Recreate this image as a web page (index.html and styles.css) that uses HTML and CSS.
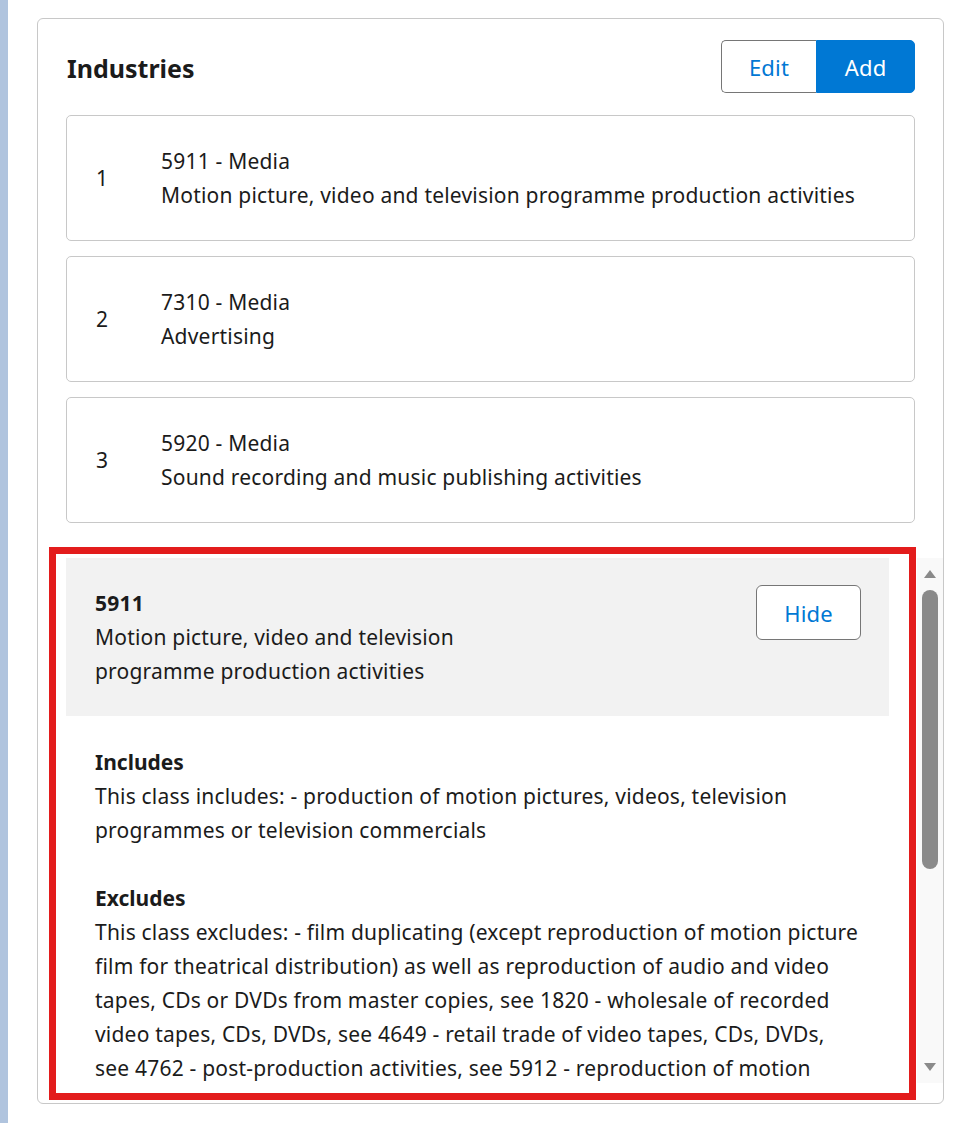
FILE: index.html
```html
<!DOCTYPE html>
<html lang="en">
<head>
<meta charset="utf-8">
<title>Industries</title>
<link rel="stylesheet" href="styles.css">
</head>
<body>
<div class="page">
  <div class="strip"></div>
  <main class="main">
    <div class="card">
      <div class="header">
        <h2 class="title">Industries</h2>
        <div class="btn-group">
          <button class="btn btn-edit">Edit</button>
          <button class="btn btn-add">Add</button>
        </div>
      </div>
      <div class="list">
        <div class="item">
          <div class="num">1</div>
          <div class="item-text">
            <div>5911 - Media</div>
            <div>Motion picture, video and television programme production activities</div>
          </div>
        </div>
        <div class="item">
          <div class="num">2</div>
          <div class="item-text">
            <div>7310 - Media</div>
            <div>Advertising</div>
          </div>
        </div>
        <div class="item">
          <div class="num">3</div>
          <div class="item-text">
            <div>5920 - Media</div>
            <div>Sound recording and music publishing activities</div>
          </div>
        </div>
      </div>
      <div class="details">
        <div class="details-scroll">
          <div class="summary">
            <div class="summary-text">
              <div class="code">5911</div>
              <div>Motion picture, video and television programme production activities</div>
            </div>
            <button class="btn-hide">Hide</button>
          </div>
          <div class="section">
            <div class="section-head">Includes</div>
            <div>This class includes: - production of motion pictures, videos, television programmes or television commercials</div>
          </div>
          <div class="section">
            <div class="section-head">Excludes</div>
            <div>This class excludes: - film duplicating (except reproduction of motion picture film for theatrical distribution) as well as reproduction of audio and video tapes, CDs or DVDs from master copies, see 1820 - wholesale of recorded video tapes, CDs, DVDs, see 4649 - retail trade of video tapes, CDs, DVDs, see 4762 - post-production activities, see 5912 - reproduction of motion picture film for theatrical distribution, see 5912 - sound recording and recording of books on tape, see 5920 - television broadcasting, see 6020 - creating a complete television channel programme, see 6020 - film processing other than for the motion picture industry, see 7420</div>
          </div>
        </div>
        <div class="scrollbar">
          <div class="arrow arrow-up"></div>
          <div class="track"><div class="thumb"></div></div>
          <div class="arrow arrow-down"></div>
        </div>
        <div class="annotation"></div>
      </div>
    </div>
  </main>
</div>
</body>
</html>
```

FILE: styles.css
```css
* { box-sizing: border-box; }

html, body {
  margin: 0;
  padding: 0;
  background: #ffffff;
}

body {
  font-family: "Noto Sans", "Open Sans", sans-serif;
  font-size: 21px;
  letter-spacing: 0.2px;
  line-height: 34px;
  color: #1b1b1b;
}

.page {
  display: flex;
  min-height: 1123px;
}

.strip {
  width: 8px;
  background: #b0c4de;
  flex: none;
}

.main {
  padding: 18px 0 0 29px;
}

.card {
  width: 907px;
  height: 1086px;
  border: 1px solid #c8c8c8;
  border-radius: 6px;
  padding: 21px 28px 20px 28px;
  display: flex;
  flex-direction: column;
}

.header {
  display: flex;
  justify-content: space-between;
  align-items: center;
  height: 53px;
}

.title {
  margin: 3px 0 0 1px;
  font-size: 25px;
  font-weight: 700;
  letter-spacing: 0;
  line-height: 34px;
  color: #1b1b1b;
}

.btn-group {
  display: flex;
  height: 53px;
}

.btn {
  font-family: inherit;
  font-size: 22px;
  letter-spacing: 0.2px;
  line-height: 1;
  padding: 1px 0 0;
  cursor: pointer;
  margin: 0;
}

.btn-edit {
  width: 95px;
  background: #ffffff;
  color: #0078d4;
  border: 1px solid #767676;
  border-right: none;
  border-radius: 5px 0 0 5px;
}

.btn-add {
  width: 99px;
  background: #0078d4;
  color: #ffffff;
  border: 1px solid #0078d4;
  border-radius: 0 5px 5px 0;
}

.list {
  margin-top: 22px;
  display: flex;
  flex-direction: column;
  gap: 15px;
}

.item {
  display: flex;
  align-items: center;
  border: 1px solid #c8c8c8;
  border-radius: 5px;
  padding: 28px 28px 28px 29px;
}

.num {
  width: 65px;
  flex: none;
}

.details {
  position: relative;
  margin-top: 35px;
  margin-right: -28px;
  height: 525px;
  display: flex;
}

.details-scroll {
  flex: 1;
  overflow: hidden;
  padding-right: 28px;
}

.summary {
  background: #f2f2f2;
  padding: 27px 28px 28px 29px;
  display: flex;
  justify-content: space-between;
  align-items: flex-start;
}

.summary-text {
  max-width: 400px;
  padding-top: 1px;
}

.code {
  font-weight: 700;
}

.btn-hide {
  width: 105px;
  height: 55px;
  background: #ffffff;
  color: #0078d4;
  border: 1px solid #767676;
  border-radius: 6px;
  font-family: inherit;
  font-size: 22px;
  letter-spacing: 0.2px;
  padding: 0;
  cursor: pointer;
  margin: 0;
}

.section {
  padding-left: 29px;
  padding-right: 26px;
  margin-top: 29px;
}

.section + .section {
  margin-top: 34px;
}

.section-head {
  font-weight: 700;
  letter-spacing: 0;
}

.scrollbar {
  width: 26px;
  flex: none;
  background: #f9f9f9;
  display: flex;
  flex-direction: column;
  align-items: center;
  padding: 12px 0 12px;
}

.arrow {
  width: 0;
  height: 0;
  border-left: 6px solid transparent;
  border-right: 6px solid transparent;
  flex: none;
}

.arrow-up {
  border-bottom: 8px solid #8a8a8a;
}

.arrow-down {
  border-top: 8px solid #8a8a8a;
}

.track {
  flex: 1;
  width: 100%;
  display: flex;
  justify-content: center;
  padding-top: 12px;
}

.thumb {
  width: 16px;
  height: 279px;
  background: #8a8a8a;
  border-radius: 8px;
}

.annotation {
  position: absolute;
  top: -11px;
  left: -17px;
  right: 27px;
  bottom: -17px;
  border: 7px solid #e31c1c;
  pointer-events: none;
}
```
